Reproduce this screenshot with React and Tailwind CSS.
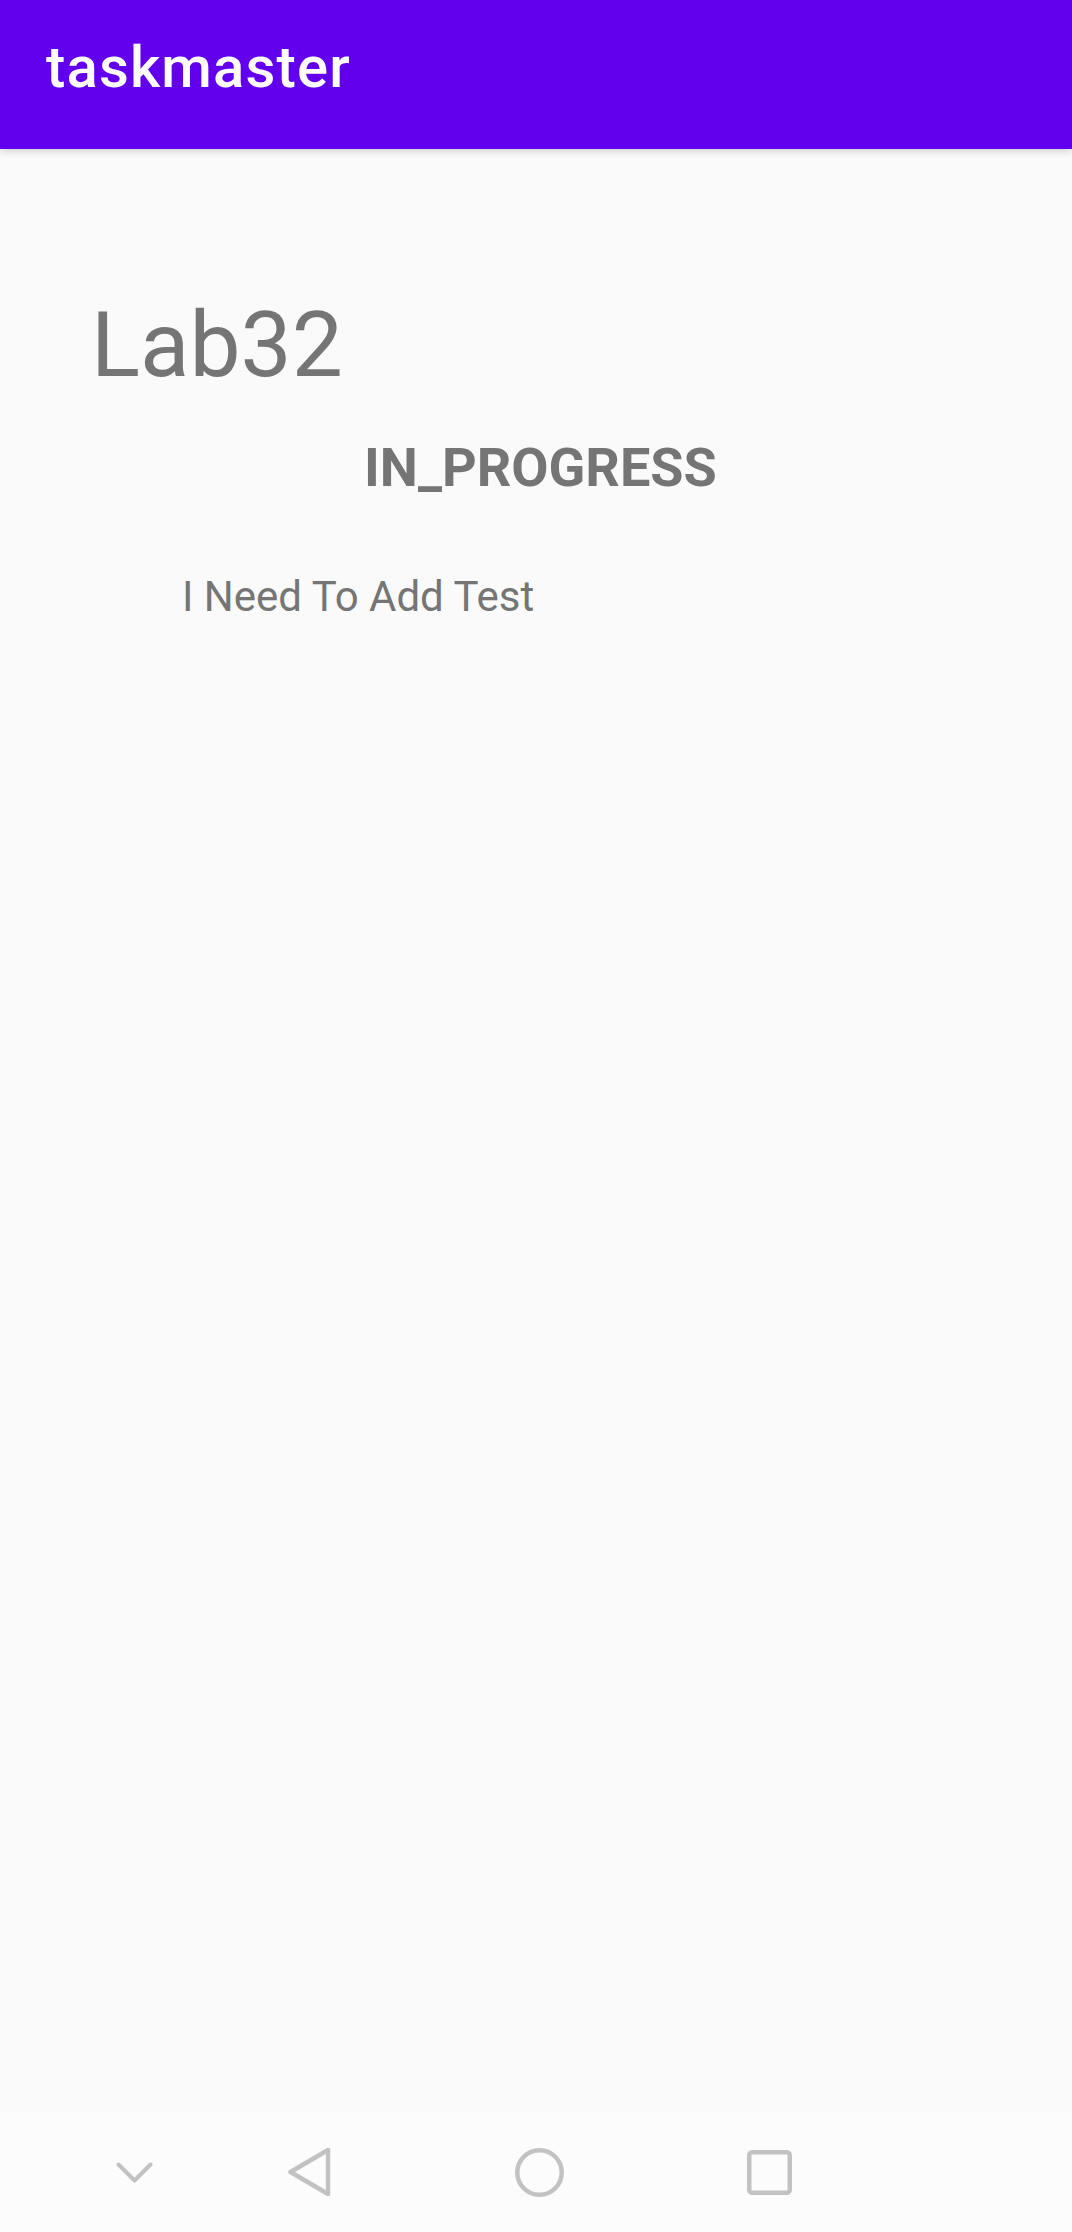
import React from 'react';

const NavBar = () => {
  return (
    <div className="mt-auto h-[120px] bg-[#fcfcfc] flex items-center pl-[104px] text-[#c2c2c2]">
      <div className="w-[60px] flex justify-center">
        <svg width="37" height="21" viewBox="0 0 37 21" fill="none" stroke="currentColor" strokeWidth="4" strokeLinecap="round" strokeLinejoin="round">
          <path d="M2.5 2.5 L18.5 18.5 L34.5 2.5" />
        </svg>
      </div>
      <div className="w-[60px] ml-[115px] flex justify-center">
        <svg width="44" height="50" viewBox="0 0 44 50" fill="none" stroke="currentColor" strokeWidth="4.5" strokeLinejoin="round">
          <path d="M41 3 L41 47 L3.5 25 Z" />
        </svg>
      </div>
      <div className="w-[60px] ml-[170px] flex justify-center">
        <svg width="49" height="49" viewBox="0 0 49 49" fill="none" stroke="currentColor" strokeWidth="4.5">
          <circle cx="24.5" cy="24.5" r="22.25" />
        </svg>
      </div>
      <div className="w-[60px] ml-[170px] flex justify-center">
        <svg width="45" height="45" viewBox="0 0 45 45" fill="none" stroke="currentColor" strokeWidth="4.5">
          <rect x="2.25" y="2.25" width="40.5" height="40.5" rx="3" />
        </svg>
      </div>
    </div>
  );
};

const App = () => {
  return (
    <div className="h-[2232px] flex flex-col bg-[#fafafa] font-['Roboto',_'Liberation_Sans',_sans-serif]">
      <header className="h-[149px] shrink-0 bg-[#6200ee] shadow-[0_2px_8px_rgba(0,0,0,0.18)] relative z-10 px-[46px] pt-[38px]">
        <h1 className="text-[58px] leading-[58px] font-medium tracking-[0.02em] text-white">taskmaster</h1>
      </header>

      <main className="flex flex-col text-[#757575]">
        <h2 className="mt-[151px] pl-[91px] text-[91px] leading-[90px] font-normal">Lab32</h2>
        <p className="mt-[51px] pl-[364px] text-[54px] leading-[54px] font-bold">IN_PROGRESS</p>
        <p className="mt-[81px] pl-[182px] text-[42px] leading-[42px]">I Need To Add Test</p>
      </main>

      <NavBar />
    </div>
  );
};

export default App;
